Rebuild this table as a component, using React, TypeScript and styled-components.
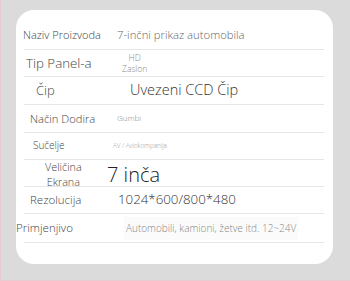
import styled, { createGlobalStyle } from 'styled-components';

/** ---- Spec rows ---- */
type Spec = {
  label: string[];
  value: string[];
  h: number;
  lx: number;
  ls: number;
  vx: number;
  vs: number;
  vc: string;
  tint?: boolean;
};

const specs: Spec[] = [
  { label: ['Naziv Proizvoda'], value: ['7-inčni prikaz automobila'], h: 28, lx: -1, ls: 11, vx: 13, vs: 11.3, vc: '#666' },
  { label: ['Tip Panel-a'], value: ['HD', 'Zaslon'], h: 27, lx: 2, ls: 13.3, vx: 18, vs: 8.5, vc: '#888' },
  { label: ['Čip'], value: ['Uvezeni CCD Čip'], h: 28, lx: 12, ls: 13, vx: 26, vs: 14.5, vc: '#333' },
  { label: ['Način Dodira'], value: ['Gumbi'], h: 28, lx: 6, ls: 11.2, vx: 13, vs: 8, vc: '#888' },
  { label: ['Sučelje'], value: ['AV / Aviokompanija'], h: 27, lx: 9, ls: 10, vx: 9, vs: 6.3, vc: '#999' },
  { label: ['Veličina', 'Ekrana'], value: ['7 inča'], h: 27, lx: 21, ls: 10.8, vx: 3, vs: 20, vc: '#222' },
  { label: ['Rezolucija'], value: ['1024*600/800*480'], h: 27, lx: 6, ls: 11.5, vx: 14, vs: 13.3, vc: '#333' },
  { label: ['Primjenjivo'], value: ['Automobili, kamioni, žetve itd. 12~24V'], h: 29, lx: -8, ls: 11.5, vx: 20, vs: 10, vc: '#888', tint: true },
];

const App: React.FC = () => (
  <>
    <GlobalStyle />
    <Page>
      <Card>
        {specs.map((s) => (
          <Row key={s.label.join()} $h={s.h}>
            <Label $x={s.lx} $size={s.ls}>
              {s.label.map((l) => (
                <span key={l}>{l}</span>
              ))}
            </Label>
            <Value $x={s.vx} $size={s.vs} $color={s.vc} $tint={s.tint}>
              {s.value.map((v) => (
                <span key={v}>{v}</span>
              ))}
            </Value>
          </Row>
        ))}
      </Card>
    </Page>
  </>
);

export default App;

/* ---------- styles ---------- */
const GlobalStyle = createGlobalStyle`
  html, body {
    margin: 0;
    padding: 0;
    background: #dcdbdc;
  }
  * { box-sizing: border-box; }
`;

const Page = styled.main`
  width: 350px;
  height: 281px;
  padding: 10px 17px 0 15px;
  border-left: 1px solid #e7cdd1;
  border-bottom: 1px solid #e7cdd1;
  background: #dcdbdc;
  font-family: 'Open Sans', 'Noto Sans', sans-serif;
  font-weight: 300;
  overflow: hidden;
`;

const Card = styled.section`
  display: flex;
  flex-direction: column;
  width: 317px;
  height: 254px;
  padding: 12px 9px 0 8px;
  border-radius: 18px;
  background: #fff;
`;

const Row = styled.div<{ $h: number }>`
  display: grid;
  grid-template-columns: 80px 1fr;
  align-items: center;
  height: ${(p) => p.$h}px;
  border-bottom: 1px solid #e6e6e6;
  white-space: nowrap;
`;

const Label = styled.div<{ $x: number; $size: number }>`
  display: flex;
  flex-direction: column;
  align-items: center;
  justify-self: start;
  margin-left: ${(p) => p.$x}px;
  font-size: ${(p) => p.$size}px;
  line-height: 1.36;
  color: #444;
`;

const Value = styled.div<{ $x: number; $size: number; $color: string; $tint?: boolean }>`
  display: flex;
  flex-direction: column;
  align-items: center;
  justify-self: start;
  margin-left: ${(p) => p.$x}px;
  padding: ${(p) => (p.$tint ? '5px 2px' : '0')};
  font-size: ${(p) => p.$size}px;
  line-height: 1.3;
  color: ${(p) => p.$color};
  background: ${(p) => (p.$tint ? '#fbfbfb' : 'transparent')};
`;
